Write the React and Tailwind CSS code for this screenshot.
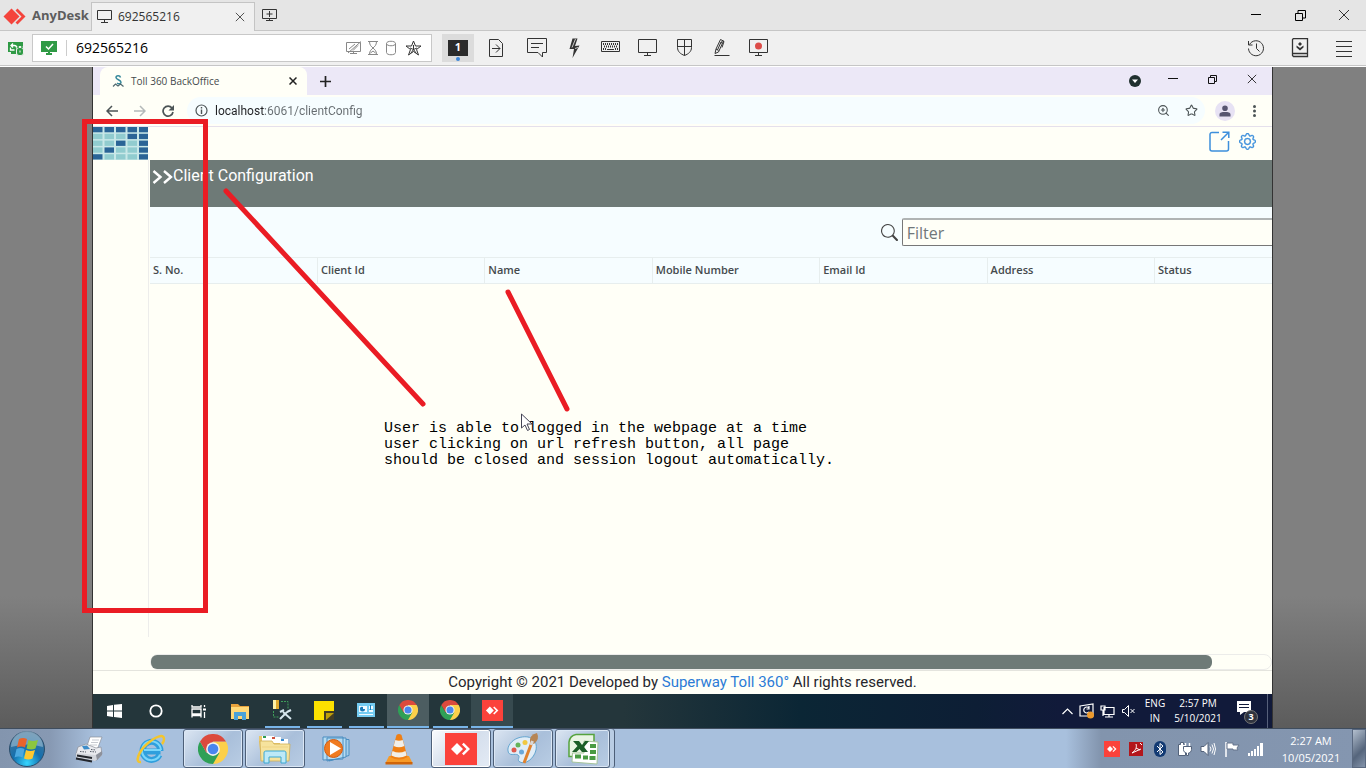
import React from 'react';
import { BsGear, BsSearch } from 'react-icons/bs';
import { Star, ZoomIn } from 'lucide-react';

const ui = "font-['Open_Sans','Noto_Sans',sans-serif]";

function Svg({ w, h, children, className = '' }) {
  return (
    <svg width={w} height={h} viewBox={`0 0 ${w} ${h}`} fill="none" stroke="currentColor" className={`shrink-0 ${className}`} aria-hidden="true">
      {children}
    </svg>
  );
}

function IconButton({ label, className = '', children }) {
  return (
    <button type="button" aria-label={label} className={`flex shrink-0 items-center justify-center ${className}`}>
      {children}
    </button>
  );
}

const AnyDeskLogo = () => (
  <Svg w={23} h={17}>
    <g stroke="none" fill="#f4443c">
      <path d="M8.500 0.500l8 8-8 8-8-8z" />
      <path d="M12.500 2.500l2-2 8 8-8 8-2-2 6-6z" />
    </g>
  </Svg>
);

const AnyDeskTile = ({ size }) => (
  <svg width={size} height={size} viewBox="0 0 32 32" aria-hidden="true">
    <path fill="#fb423b" d="M0 0h32v32H0z" />
    <path fill="#fff" d="M12 10l6 6-6 6-6-6zM17 11.500l1.700-1.700L25 16l-6.300 6.200L17 20.500l4.500-4.500z" />
  </svg>
);

const Monitor = () => (
  <Svg w={20} h={20}>
    <path d="M.5 1.500h18v13h-18zM9.500 14.500v3M6 17.500h7" />
  </Svg>
);

const Close = ({ size = 12 }) => (
  <svg width={size} height={size} viewBox="0 0 12 12" stroke="currentColor" fill="none" aria-hidden="true">
    <path d="M1 1l10 10M11 1L1 11" />
  </svg>
);

const Restore = () => (
  <Svg w={11} h={11}>
    <path d="M.5 3.500h7v7h-7zM3 3.500v-3h7.500v7.500h-3" />
  </Svg>
);

const Minimize = () => (
  <Svg w={10} h={2}>
    <path d="M0 .5h10" />
  </Svg>
);

const Chrome = ({ size }) => (
  <svg width={size} height={size} viewBox="0 0 48 48" aria-hidden="true">
    <path fill="#fcd04a" d="M24 24l0 24a24 24 0 0 0 20.800-36L24 12z" />
    <path fill="#2fa056" d="M3.200 12A24 24 0 0 0 24 48l10.400-18L13.600 30z" />
    <path fill="#dc4a3d" d="M3.200 12L13.600 30 24 12h20.800A24 24 0 0 0 3.200 12z" />
    <circle cx="24" cy="24" r="11" fill="#f2f2ee" />
    <circle cx="24" cy="24" r="8.500" fill="#4a86ee" />
  </svg>
);

const toolbarItems = [
  ['Chat', <Svg w={22} h={22}><path d="M1.500 1.500h19v14h-4v4.500l-4.500-4.500h-10.500zM5 6.500h12M5 10.500h8" /></Svg>],
  ['Actions', <Svg w={14} h={22}><path fill="currentColor" stroke="none" d="M5.500 1.500h5L8 9l4.500-.5L5.500 21 7 12 2.500 12z" /><path stroke="#f0f0f0" strokeWidth=".8" d="M8.500 2L5 10.500M8 11.500l3-1" /></Svg>],
  ['Keyboard', <Svg w={20} h={14}><path d="M.5.5h18v10H.5z" /><path strokeWidth="2" strokeDasharray="1 1" d="M2 3h15M3 5.500h13M2 8h3" /><path d="M6 8.500h7" /><path strokeWidth="2" strokeDasharray="1 1" d="M14 8h3" /></Svg>],
  ['Display', <Monitor />],
  ['Permissions', <Svg w={16} h={20}><path d="M.5 1.500h14v8c0 4-3 6.500-7 8-4-1.500-7-4-7-8zM7.500 1.500v16M.5 8.500h14" /></Svg>],
  ['Whiteboard', <Svg w={18} h={20}><path d="M1.500 17.500h15M2 15.500l1-4.500L7.500 1.500l3 1.500-5 11zM7.500 6l2-3.500 1.500 1-2 6M3 11l2.500 1.500M8 4L4.500 12" /></Svg>],
  ['Record', <Svg w={20} h={20}><path d="M.5 1.500h18v13h-18zM9.500 14.500v3M6 17.500h7" /><circle cx="9.500" cy="8" r="3.500" fill="#dc4c48" stroke="none" /></Svg>],
];

function AnyDeskBar() {
  return (
    <header className={`text-[#333] ${ui}`}>
      <div className="flex h-[31px] items-end border-b border-[#c6c6c6] bg-[#e5e5e5]">
        <div className="flex h-[28px] w-[91px] shrink-0 items-center gap-[6px] pl-[3px] text-[13px] font-bold text-[#5d5d5d]">
          <AnyDeskLogo />
          <span>AnyDesk</span>
        </div>
        <div className="-mb-px flex h-[29px] w-[164px] items-center border border-b-0 border-[#c4c4c4] bg-[#f0f0f0] pr-[6px] pl-[5px] text-xs">
          <Svg w={16} h={14}><path d="M.5.5h14v9H.5zM7.500 9.500v3M4 12.500h7" /></Svg>
          <span className="ml-[5px] flex-1">692565216</span>
          <IconButton label="Close tab" className="h-4 w-4"><Close size={10} /></IconButton>
        </div>
        <IconButton label="New tab" className="h-full w-[30px]">
          <Svg w={16} h={14}><path d="M.5 1.500h14v9H.5zM7.500 3v6M4.500 6h6M7.500 10.500v2M4 12.500h7" /></Svg>
        </IconButton>
        <div className="ml-auto flex h-full text-black">
          <IconButton label="Minimize" className="w-11"><Minimize /></IconButton>
          <IconButton label="Restore" className="w-11"><Restore /></IconButton>
          <IconButton label="Close" className="w-11 text-[#333]"><Close /></IconButton>
        </div>
      </div>
      <div className="flex h-[35px] items-center border-b border-[#c6c6c6] bg-[#f0f0f0]">
        <div className="flex w-8 shrink-0 justify-center text-[#2f9a45]">
          <Svg w={18} h={16}>
            <path fill="currentColor" stroke="none" d="M1 2h15v4H9.500v6H1zM4 12h5v2H4z" />
            <path stroke="#fff" strokeWidth="1.300" d="M4 5.500h3.500a2 2 0 0 1 2 2M6 3.500L4 5.500l2 2M3.500 7.500v2.500h4" />
            <rect x="9.500" y="7.500" width="7" height="8" rx="2.500" fill="currentColor" stroke="#f0f0f0" />
            <path strokeWidth="1.500" d="M11 8V6.500a2 2 0 0 1 4 0V8" />
            <path stroke="#fff" d="M13 10.500v2" />
          </Svg>
        </div>
        <div className="flex h-[28px] w-[400px] shrink-0 items-center border border-[#c8c8c8] bg-white pr-[9px] pl-[7px]">
          <Svg w={18} h={16} className="text-[#2f9a45]">
            <path fill="currentColor" stroke="none" d="M1 1h16v11H1zM8 12h2v2H8zM6 13h6v2H6z" />
            <path stroke="#fff" strokeWidth="1.500" d="M6 6.500L8.500 9 13 4" />
          </Svg>
          <span className="mr-[9px] ml-[8px] h-4 w-px bg-[#ccc]" />
          <input aria-label="Remote address" defaultValue="692565216" className="min-w-0 flex-1 bg-transparent text-sm text-black outline-none" />
          <div className="flex items-center gap-[4px] text-[#888]">
            <IconButton label="Privacy mode"><Svg w={16} h={16}><path d="M.5 2.500h14v9H.5zM7.500 11.500v2M4 13.500h7M2 13L15 1.500M3 9l6-5M7 10.500l5-5" /></Svg></IconButton>
            <IconButton label="Session time"><Svg w={14} h={16}><path d="M2 1.500h10M2 14.500h10M3.500 1.500c0 4 2 5 3.500 6.500C8.500 6.500 10.500 5.500 10.500 1.500M3.500 14.500c0-4 2-5 3.500-6.500 1.500 1.500 3.500 2.500 3.500 6.500M4.500 13l2.500-2 2.500 2" /></Svg></IconButton>
            <IconButton label="Storage"><Svg w={14} h={16}><path d="M2.500 3.500v9c0 3 9 3 9 0v-9M2.500 3.500c0-3 9-3 9 0s-9 3-9 0" /></Svg></IconButton>
            <IconButton label="Add to favourites" className="ml-[3px] text-[#333]"><Svg w={17} h={16}><path d="M8.500 1l2 5h5.500l-4.500 3.500 2 5.500-5-3.500-5 3.500 2-5.500L1 6h5.500zM8.500 5v4.500M8.500 9.500L5 8M8.500 9.500L12 8M8.500 9.500L6 13M8.500 9.500l2.500 3.500" /></Svg></IconButton>
          </div>
        </div>
        <IconButton label="Monitor 1" className="ml-[10px] h-[28px] w-[32px] flex-col gap-px bg-[#dcdcdc]">
          <span className="mt-1 flex h-4 w-5 items-center justify-center bg-[#2b2b2b] text-[11px] font-bold text-white">1</span>
          <span className="h-1 w-1 rounded-full bg-[#3d86d8]" />
        </IconButton>
        <IconButton label="File transfer" className="w-[44px]"><Svg w={14} h={20}><path d="M.5 1.500h9l4 4v13H.5zM3 10.500h8M7 6.500l4 4-4 4" /></Svg></IconButton>
        {toolbarItems.map(([label, icon]) => <IconButton key={label} label={label} className="w-[37px]">{icon}</IconButton>)}
        <div className="ml-auto flex">
          <IconButton label="History" className="w-11"><Svg w={18} h={18}><path d="M2.500 5.500a7.500 7.500 0 1 1-1 4M1.500 2v4h4M9.500 4.500v5l3 3" /></Svg></IconButton>
          <IconButton label="Address book" className="w-11"><Svg w={18} h={20}><path strokeWidth="1.300" d="M1.500 1.500l1-1h14v18h-14l-1-1zM2 15.500h14" /><path fill="currentColor" stroke="none" d="M9 4l2 2-2 2-2-2zM5.500 7.500L9 10l3.500-2.500v2L9 12.500 5.500 9.500z" /></Svg></IconButton>
          <IconButton label="Menu" className="w-11"><Svg w={16} h={17}><path d="M0 1.500h16M0 6.500h16M0 11.500h16M0 16.500h16" /></Svg></IconButton>
        </div>
      </div>
      <div className="h-px bg-white" />
    </header>
  );
}

function BrowserChrome() {
  return (
    <div className={ui}>
      <div className="flex h-[28px] items-center bg-[#ece8f7]">
        <div className="ml-[7px] flex h-full w-[207px] items-center rounded-t-lg bg-[#fffff7] pr-[8px] pl-[11px] text-[10px] text-[#454a4d]">
          <Svg w={14} h={14}>
            <path stroke="#35889b" strokeWidth="1.500" d="M9.500 3.500C9 1 5 1.200 5 3.500s5 2.200 5 4.700c0 1.500-2.500 2-4 .8" />
            <path stroke="#526a70" strokeWidth="1.200" d="M2 12.500l2.500-2.500 2.500 2L9.500 10l3 2.500" />
          </Svg>
          <span className="ml-[6px] flex-1 whitespace-nowrap">Toll 360 BackOffice</span>
          <IconButton label="Close browser tab" className="h-3 w-3 text-[#222]"><svg width="8" height="8" viewBox="0 0 8 8" stroke="currentColor" strokeWidth="1.500" aria-hidden="true"><path d="M.5.5l7 7M7.500.5l-7 7" /></svg></IconButton>
        </div>
        <IconButton label="New browser tab" className="w-[37px] text-[#222]"><Svg w={11} h={11}><path strokeWidth="1.700" d="M5.500 0v11M0 5.500h11" /></Svg></IconButton>
        <div className="ml-auto flex items-start text-[#111]">
          <IconButton label="Search tabs" className="h-4 w-[39px]"><Svg w={12} h={12}><circle cx="6" cy="6" r="6" fill="#20302f" stroke="none" /><path fill="#fff" stroke="none" d="M3 4.500h6L6 8z" /></Svg></IconButton>
          <IconButton label="Minimize browser" className="h-3 w-[38px]"><Minimize /></IconButton>
          <IconButton label="Restore browser" className="h-3 w-[40px]"><Svg w={9} h={9}><path d="M.5 2.500h6v6h-6zM2.500 2.500v-2h6v6h-2" /></Svg></IconButton>
          <IconButton label="Close browser" className="h-3 w-[40px]"><Close size={10} /></IconButton>
        </div>
      </div>
      <div className="flex h-8 items-center border-b border-[#e5e0ec] bg-[#fffff7] pl-[5px] text-[#4c5456]">
        <IconButton label="Back" className="w-7"><Svg w={12} h={12}><path strokeWidth="1.500" d="M12 6H1M6 1L1 6l5 5" /></Svg></IconButton>
        <IconButton label="Forward" className="w-7 text-[#b4b9b9]"><Svg w={12} h={12}><path strokeWidth="1.500" d="M0 6h11M6 1l5 5-5 5" /></Svg></IconButton>
        <IconButton label="Reload" className="w-7"><Svg w={12} h={12}><path strokeWidth="1.700" d="M10 3a5 5 0 1 0 1 4" /><path fill="currentColor" stroke="none" d="M12 0v5.500H6.500z" /></Svg></IconButton>
        <div className="ml-[5px] flex h-[27px] min-w-0 flex-1 items-center rounded-full bg-[#f6fdff] pl-[8px]">
          <Svg w={13} h={13}><circle cx="6.500" cy="6.500" r="5.500" strokeWidth="1.200" /><path strokeWidth="1.400" d="M6.500 3v1.500M6.500 5.500V10" /></Svg>
          <input aria-label="Web address" defaultValue="localhost:6061/clientConfig" className="ml-[7px] min-w-0 flex-1 bg-[linear-gradient(to_right,#202124_50px,#666c70_50px)] bg-clip-text font-[Roboto,sans-serif] text-xs text-transparent outline-none" />
          <IconButton label="Zoom" className="w-7"><ZoomIn size={13} strokeWidth={2} /></IconButton>
          <IconButton label="Bookmark" className="w-7"><Star size={13} strokeWidth={2} /></IconButton>
        </div>
        <IconButton label="Profile" className="mr-[5px] ml-[10px] h-5 w-5 rounded-full bg-[#e7e2f4] text-[#575571]"><Svg w={12} h={12}><path fill="currentColor" stroke="none" d="M6 .5a2.800 2.800 0 1 1 0 5.600 2.800 2.800 0 0 1 0-5.600zM.5 11.500V9.500C.5 7.500 3 7 6 7s5.500.5 5.500 2.500v2z" /></Svg></IconButton>
        <IconButton label="Browser menu" className="mr-[4px] w-7"><Svg w={3} h={12}><g fill="currentColor" stroke="none"><circle cx="1.500" cy="1.500" r="1.500" /><circle cx="1.500" cy="6" r="1.500" /><circle cx="1.500" cy="10.500" r="1.500" /></g></Svg></IconButton>
      </div>
    </div>
  );
}

function TollLogo() {
  const cells = [];
  for (let r = 0; r < 5; r++) {
    for (let c = 0; c < 5; c++) {
      const dark = r === 0 || c === 4 || r + c === 4;
      cells.push(<path key={`${r}-${c}`} fill={dark ? '#2a6496' : '#91cccf'} d={`M${c * 11.5} ${r * 6.8}h9.500v5.300h-9.500z`} />);
    }
  }
  return <svg width="55" height="33" viewBox="0 0 55 33" role="img" aria-label="Toll 360"><path fill="#c9e8e8" d="M0 0h56v33H0z" />{cells}</svg>;
}

const columns = ['S. No.', 'Client Id', 'Name', 'Mobile Number', 'Email Id', 'Address', 'Status'];

function TollPage() {
  return (
    <div className="flex flex-1 flex-col bg-[#fffff7]">
      <div className="flex h-[33px] items-start justify-between">
        <TollLogo />
        <div className="mr-[16px] flex h-[29px] items-center gap-[9px] text-[#3d8fdc]">
          <IconButton label="Open in new window"><Svg w={21} h={21}><path strokeWidth="1.500" d="M10 1.500H3a2 2 0 0 0-2 2V18a2 2 0 0 0 2 2h14.500a2 2 0 0 0 2-2v-8M12 9l7.500-7.500M13.500 1.200h6.300V7" /></Svg></IconButton>
          <IconButton label="Settings"><BsGear size={17} strokeWidth="0.3" /></IconButton>
        </div>
      </div>
      <div className="flex flex-1">
        <nav aria-label="Sections" className="mb-[33px] w-[56px] shrink-0 border-r border-[#ededeb]" />
        <main className="ml-px flex min-w-0 flex-1 flex-col">
          <h1 className="flex h-[47px] items-start bg-[#6e7a77] pt-[4px] pl-[2px] font-[Roboto,sans-serif] text-base text-white">
            <Svg w={21} h={24}><path strokeWidth="2.400" d="M1.500 7l7 6-7 6M12 7l7 6-7 6" /></Svg>
            <span>Client Configuration</span>
          </h1>
          <div className={`overflow-hidden bg-[#f6fdff] ${ui}`}>
            <div className="flex h-[50px] items-center justify-end">
              <label htmlFor="filter" aria-label="Filter" className="mr-[4px] text-[#444]"><BsSearch size={17} /></label>
              <input id="filter" placeholder="Filter" className="h-[28px] w-[33%] rounded-l-[2px] border border-t-2 border-r-0 border-[#777] border-t-[#b0b4b4] bg-[#fffff7] px-[4px] text-base outline-none placeholder:text-[#70777a]" />
            </div>
            <table className="w-[104.5%] table-fixed border-collapse text-left text-[11px] text-[#454a4d]">
              <thead>
                <tr className="h-[26px] border-y border-[#e7eeee]">
                  {columns.map((c) => <th key={c} scope="col" className="border-r border-[#e7eeee] px-[3px] py-0 font-semibold">{c}</th>)}
                </tr>
              </thead>
            </table>
          </div>
          <div className="mt-auto h-4 rounded-lg border border-[#ececea]">
            <div className="h-[14px] w-[94.7%] rounded-md bg-[#6e7a77]" />
          </div>
        </main>
      </div>
      <footer className="flex h-6 items-center justify-center border-t border-[#e4e4de] font-[Roboto,sans-serif] text-[15px] text-[#26262c]">
        <p>Copyright © 2021 Developed by <a href="#superway" className="text-[#2b7bd6]">Superway Toll 360°</a> All rights reserved.</p>
      </footer>
    </div>
  );
}

const remoteTasks = [
  ['Start', <Svg w={15} h={14}><path fill="#fff" stroke="none" d="M0 2l6-1v5.500H0zM7 .8L15 0v6.500H7zM0 7.500h6V13l-6-1zM7 7.500h8V14l-8-1z" /></Svg>, ''],
  ['Cortana', <Svg w={14} h={14}><circle cx="7" cy="7" r="5.700" stroke="#fff" strokeWidth="1.800" /></Svg>, ''],
  ['Task view', <Svg w={15} h={14}><path stroke="#fff" strokeWidth="1.300" d="M1 1v2h9V1M1 5h9v5H1zM1 13.500v-2h9v2M13.500 1v2M13.500 8v6" /><path fill="#fff" stroke="none" d="M12 4.500h3v2h-3z" /></Svg>, ''],
  ['File Explorer', <Svg w={20} h={17}><g stroke="none"><path fill="#e8a33d" d="M1 1h7l2 2h9v4H1z" /><path fill="#ffd978" d="M1 4h18v12H1z" /><path fill="#4ba3d9" d="M4 9h12v8h-4v-4H8v4H4z" /></g></Svg>, ''],
  ['Database tools', <Svg w={22} h={22}><path stroke="#3f9d5a" strokeDasharray="2 1" d="M10 2.500h7v7M2.500 12v6h6" /><g stroke="none"><path fill="#e0aa2f" d="M2 1h6v9H2z" /><path fill="#fff2a6" d="M2 1h3v9H2z" /></g><path stroke="#d7e7ee" strokeWidth="2" d="M9 20l7-7M12 13l8 7M9 13l4-2M16 13l4-2" /></Svg>, 'open'],
  ['Sticky Notes', <Svg w={20} h={19}><path fill="#fce100" stroke="none" d="M0 0h20v10h-10v9H0z" /><path fill="#433d24" stroke="none" d="M20 10v9H10z" /><path fill="#433d24" stroke="none" d="M10 10h10v9H10z" /><path fill="#be9f0a" stroke="none" d="M12 12h8l-8 7z" /></Svg>, 'open'],
  ['System panel', <Svg w={18} h={14}><g stroke="none"><path fill="#75ccf2" d="M0 0h18v14H0z" /><path fill="#f2fbff" d="M2 3h8v6H2zM12 3h4v3h-4zM12 7h4v2h-4zM2 11h14v1H2z" /><path fill="#197ab8" d="M3 6a2 2 0 0 1 3-2v2h2a2 2 0 0 1-5 0zM13 2h1v5h-1z" /></g></Svg>, 'open'],
  ['Google Chrome', <Chrome size={20} />, 'active'],
  ['Google Chrome 2', <Chrome size={20} />, 'open'],
  ['AnyDesk remote', <AnyDeskTile size={21} />, 'selected'],
];

const remoteState = {
  '': '',
  open: '',
  active: 'bg-[#4c5d61]',
  selected: 'bg-[#374a4f]',
};

function RemoteTaskbar() {
  return (
    <div className={`flex h-[34px] items-center bg-[linear-gradient(to_right,#24363b_0,#24363b_45%,#0b2635_60%,#0d1e35_75%,#111a3a_82%)] text-white ${ui}`}>
      {remoteTasks.map(([label, icon, state]) => (
        <IconButton key={label} label={label} className={`h-full w-[42px] flex-col ${remoteState[state]}`}>
          <span className="flex flex-1 items-center">{icon}</span>
          {state && <span className={`h-[2px] bg-[#78b4e8] ${state === 'open' ? 'w-[35px]' : 'w-full'}`} />}
        </IconButton>
      ))}
      <div className="ml-auto flex items-center">
        <IconButton label="Hidden icons" className="w-[20px]"><Svg w={11} h={7}><path strokeWidth="1.200" d="M.5 6l5-5 5 5" /></Svg></IconButton>
        <IconButton label="Updates" className="w-[20px]"><Svg w={16} h={16}><path strokeWidth="1.200" d="M1 3l13-2v12H1zM10 5a3 3 0 1 0 0 4M7.500 6H10V3" /><circle cx="11.500" cy="12" r="3.500" fill="#ed9a2d" stroke="none" /></Svg></IconButton>
        <IconButton label="Network" className="w-[21px]"><Svg w={15} h={13}><path strokeWidth="1.200" d="M4 2.500h10v7H4zM9 9.500V12M5 12h8M1 1h4v4H1zM3 5v6" /></Svg></IconButton>
        <IconButton label="Muted" className="w-[20px]"><Svg w={13} h={12}><path d="M.5 4.500h2l4-4v11l-4-4h-2zM8.500 4l4 4M12.500 4l-4 4" /></Svg></IconButton>
        <div className="w-[34px] text-center text-[10px] leading-[15px]">ENG<br />IN</div>
        <div className="w-[52px] text-center text-[10px] leading-[15px] whitespace-nowrap">2:57 PM<br />5/10/2021</div>
        <IconButton label="3 notifications" className="relative ml-[12px] h-[26px] w-[22px] items-start justify-start">
          <Svg w={16} h={18}><path fill="#fff" stroke="none" d="M1 3h14v11H8l-4 3v-3H1z" /><path stroke="#111a3a" d="M3 6.500h10M3 9.500h10" /></Svg>
          <span className="absolute right-0 bottom-0 flex h-[14px] w-[14px] items-center justify-center rounded-full border border-[#777] bg-[#30343f] text-[9px] font-bold">3</span>
        </IconButton>
        <span className="mr-[4px] ml-[9px] h-[34px] w-px bg-[#56607a]" />
      </div>
    </div>
  );
}

const Fax = () => (
  <Svg w={30} h={28}>
    <path fill="#fff" stroke="#8b8f99" strokeWidth=".7" d="M16 2h12l-5 13-11-1z" />
    <path stroke="#b9bcc4" strokeWidth=".8" d="M18 5h7M17 7.500h7M16 10h7" />
    <path fill="#e9eaee" stroke="#8b8f99" strokeWidth=".7" d="M4 12l8-3 10 4 5-1 1 7-5 6-20-2-1-4z" />
    <path fill="#d2d5db" stroke="none" d="M2 18l19 2 7-3v3l-7 6-19-4z" />
    <path fill="#3d8dc9" stroke="none" d="M8 11l5-.5L16 14l-6 .5z" />
    <path stroke="#555b66" strokeDasharray="1.500 1" d="M17 14.500l5 .5M16 16.500l6 .5M6 16.500l6 .5" />
    <path stroke="#23262c" strokeWidth="1.800" d="M3 20.500l15 2.500M2 23.500l16 3" />
    <path fill="#8d919b" stroke="none" d="M22 20l6-4v4l-5 5z" />
  </Svg>
);

const Explorer = () => (
  <svg width="32" height="32" viewBox="0 0 32 32" aria-hidden="true">
    <path fill="none" stroke="#2f9fdd" strokeWidth="6" d="M25.500 18.500H9M25.500 18A9 9 0 1 0 24.500 22" />
    <path fill="none" stroke="#7ad6fa" strokeWidth="2" d="M26 17H9M26 17A9.500 9.500 0 1 0 25 22" />
    <path fill="none" stroke="#f3c52e" strokeWidth="2.500" d="M6 29C-1 30 4 18 12 11S29 0 29 6c0 2-1 4-2 5" />
  </svg>
);

const Folder = () => (
  <svg width="32" height="32" viewBox="0 0 32 32" aria-hidden="true">
    <path fill="#e9c769" d="M0 8V3h9l2 3h18v20H2z" /><path fill="#fff" d="M3 3h12v5H3zM13 4h9v6h-9zM21 6h8v6h-8z" />
    <path fill="#2f9b55" d="M4 3h3v2H4z" /><path fill="#ce513d" d="M13 4h3v2h-3z" /><path fill="#368bd0" d="M22 6h3v2h-3z" />
    <path fill="#f6e39d" stroke="#cfae55" strokeWidth=".8" d="M1 8h12l2 3h16l-1 17H2z" /><path fill="none" stroke="#efd383" d="M3 14h26" />
    <path fill="#bde9f7" stroke="#3ba8d3" d="M5 20c0-2 1-2 3-2h16c2 0 3 0 3 2v10h-5v-6H10v6H5z" />
  </svg>
);

const MediaPlayer = () => (
  <svg width="30" height="28" viewBox="0 0 30 28" aria-hidden="true">
    <path fill="#a5cfea" stroke="#4b8dc0" d="M7 4.500h20v16L7 26z" /><path fill="#b5dcf2" stroke="#4b8dc0" d="M5 3h19v19L5 26zM1 2h20v22l-20 1z" />
    <circle cx="11.500" cy="13.500" r="9" fill="#f07b20" stroke="#d25c14" /><path fill="#fff" d="M8 7l11 6.500L8 20z" />
  </svg>
);

const Vlc = () => (
  <svg width="28" height="32" viewBox="0 0 28 32" aria-hidden="true">
    <path fill="#f79a28" d="M4 23h20l3.500 7H.5z" /><path fill="#cf640a" d="M.5 29h27v2.500H.5z" />
    <path fill="#ef7f14" d="M11.500 2q2.500-2 5 0L22.500 24q-8.500 5-17 0z" />
    <path fill="#f1efe9" d="M10.300 7q3.700 1.500 7.400 0l1.600 6q-5.300 2.500-10.600 0zM7.500 18q6.500 3 13 0l1.200 4.500q-7.700 4-15.400 0z" />
  </svg>
);

const Paint = () => (
  <svg width="34" height="32" viewBox="0 0 34 32" aria-hidden="true">
    <path fill="#e1edf7" stroke="#62a4cf" d="M12 5c12-4 20 2 18 12-2 9-11 15-16 12-4-2 1-5-2-7-3-2-9 2-10-4-1-5 4-11 10-13z" />
    <circle cx="8" cy="17" r="2.500" fill="#df594d" /><circle cx="12" cy="12" r="2.500" fill="#66b45b" /><circle cx="19" cy="9.500" r="2.500" fill="#f1c841" /><circle cx="15.500" cy="19" r="2.500" fill="#6aa7d8" />
    <path stroke="#e0812d" strokeWidth="3" d="M18 30L26 9" /><path fill="#b68555" d="M24 9q-1-7 7-9 3 6-3 11z" /><path stroke="#d8d8d8" strokeWidth="3" d="M25 12l1.500-4" />
  </svg>
);

const Excel = () => (
  <svg width="32" height="32" viewBox="0 0 32 32" aria-hidden="true">
    <path fill="#eaf5e4" stroke="#56a33d" strokeWidth="1.500" d="M9 1.500h18v22H2V9q1-6.500 7-7.500z" /><path fill="#fff" stroke="#a5c49a" d="M17 8l14 1-1 22-25-2 .5-9H17z" />
    <path fill="#4a9b43" d="M23 11h6v4h-6zM23 17h6v4h-6zM22.500 23h6v4h-6zM16 22.500h5v4h-5zM8 21.500h6v4H8z" />
    <path fill="#1c5e28" d="M6 8h6l3 4 3-4h4l-5 6 4 5h-6l-2.500-3-3 3H5l5.500-6z" />
  </svg>
);

const Orb = () => (
  <svg width="38" height="38" viewBox="0 0 38 38" aria-hidden="true">
    <defs>
      <radialGradient id="orb" cx=".5" cy=".9" r=".9"><stop offset="0" stopColor="#36d6ff" /><stop offset=".45" stopColor="#136fae" /><stop offset="1" stopColor="#4e7897" /></radialGradient>
    </defs>
    <circle cx="19" cy="19" r="17.500" fill="url(#orb)" stroke="#2a4d6b" />
    <path fill="#a9c6d8" opacity=".55" d="M3 17a16 16 0 0 1 32 0q-15-5-32 0z" />
    <path fill="#e8642b" d="M11 9q4-2 8 0l-2 8.500q-4-2-8 0z" /><path fill="#8cc63f" d="M20.500 10q4 2 9.500 0l-2.500 8.500q-4 2-9 0z" />
    <path fill="#4ba8e0" d="M8.500 19q4-2 8 0l-2 8.500q-4-2-8 0z" /><path fill="#fdc82f" d="M18 20q4 2 9 0l-2.500 8.500q-4 2-8.500 0z" />
  </svg>
);

const hostTasks = [
  ['Fax', <Fax />, ''],
  ['Internet Explorer', <Explorer />, ''],
  ['Chrome', <Chrome size={30} />, 'open'],
  ['Explorer', <Folder />, 'open'],
  ['Media Player', <MediaPlayer />, ''],
  ['VLC', <Vlc />, ''],
  ['AnyDesk', <AnyDeskTile size={32} />, 'active'],
  ['Paint', <Paint />, 'open'],
  ['Excel', <Excel />, 'stack'],
];

const hostState = {
  '': 'w-[60px]',
  open: 'w-[60px] border border-[#4d5f78] bg-[linear-gradient(135deg,#dce6f2,#a9bfda_55%,#b9cde4)] shadow-[inset_0_0_0_1px_#dbe7f5]',
  stack: 'mr-[5px] w-[55px] border border-[#4d5f78] bg-[linear-gradient(135deg,#dce6f2,#a9bfda_55%,#b9cde4)] shadow-[inset_0_0_0_1px_#dbe7f5,4px_0_0_0_#b9cde4,5px_0_0_0_#4d5f78]',
  active: 'w-[60px] border border-[#4d5f78] bg-[linear-gradient(135deg,#fbfcfe,#d4deec_50%,#e4ebf5)] shadow-[inset_0_0_0_1px_#ffffff]',
};

const tray = [
  ['AnyDesk tray', <AnyDeskTile size={16} />],
  ['PDF reader', <Svg w={16} h={16}><path fill="#b3161b" stroke="none" d="M1 1h14v14H1z" /><path stroke="#fff" d="M4 12c4-3 5-6 4-9M4 12l9-4M8 7l4 2M12 2l2 2" /></Svg>],
  ['Bluetooth', <Svg w={12} h={16}><rect width="12" height="16" rx="6" fill="#123a73" stroke="none" /><path stroke="#fff" d="M3 5l6 6-3 2.500V2.500L9 5l-6 6" /></Svg>],
  ['Power', <Svg w={15} h={16}><path fill="#fff" stroke="#53627a" d="M1.500 3.500h2v-2h3v2h2v11h-7z" /><path fill="#fff" stroke="#53627a" d="M6.500 5.500h8v3c0 2-1.500 3-3 3.500v2.500h-2V12c-2-.5-3-1.500-3-3.500z" /><path stroke="#fff" strokeWidth="1.500" d="M8.500 2v3M12.500 2v3" /></Svg>],
  ['Volume', <Svg w={16} h={16}><path fill="#fff" stroke="#53627a" d="M1 5.500h3l4-4v13l-4-4H1z" /><path stroke="#fff" d="M10 5.500q2 2.500 0 5M12 3.500q3 4.500 0 9M14 2q3 6 0 12" /></Svg>],
  ['Action center', <Svg w={16} h={16}><path stroke="#fff" strokeWidth="1.500" d="M2 1v15" /><path fill="#fff" stroke="#66758c" d="M3 2h6v2h6l-2 3 1 2H9V8H3z" /></Svg>],
  ['Signal', <Svg w={16} h={16}><path fill="#fff" stroke="none" d="M0 12h2v3H0zM3 10h2v5H3zM6 8h2v7H6zM9 5h2v10H9zM12 2h3v13h-3z" /></Svg>],
];

function HostTaskbar() {
  return (
    <footer className={`flex h-[40px] items-center border-t border-[#3f4d5e] bg-[linear-gradient(to_right,#8395ae_0,#8799b3_50px,#a8c0dd_95px,#a8c0dd_calc(100%-300px),#8294ad_calc(100%-265px),#8496b0_100%)] ${ui}`}>
      <IconButton label="Start menu" className="h-full w-[58px] pr-[4px]"><Orb /></IconButton>
      {hostTasks.map(([label, icon, state]) => (
        <div key={label} className="flex h-full w-[62px] shrink-0 justify-center">
          <IconButton label={label} className={`h-full rounded-[3px] ${hostState[state]}`}>{icon}</IconButton>
        </div>
      ))}
      <div className="ml-auto flex h-full items-center">
        {tray.map(([label, icon]) => <IconButton key={label} label={label} className="w-6">{icon}</IconButton>)}
        <div className="w-[84px] pl-[2px] text-center text-[11px] leading-[17px] text-white">2:27 AM<br />10/05/2021</div>
        <button type="button" aria-label="Show desktop" className="h-full w-[14px] border border-[#5a6980] bg-[linear-gradient(135deg,#b3bfce,#55657c_60%,#8494ab)]" />
      </div>
    </footer>
  );
}

export default function App() {
  return (
    <div className="relative flex min-h-screen flex-col overflow-hidden">
      <AnyDeskBar />
      <div className="flex flex-1 bg-[linear-gradient(to_bottom,#808080_0,#808080_80%,#5c5c5c_100%)] pr-[93px] pl-[92px]">
        <div className="flex min-w-0 flex-1 flex-col border-x border-[#333]">
          <BrowserChrome />
          <TollPage />
          <RemoteTaskbar />
        </div>
      </div>
      <HostTaskbar />

      <div className="pointer-events-none absolute top-[119px] left-[82px] h-[494px] w-[126px] border-[5px] border-[#ea1c24]" />
      <svg className="pointer-events-none absolute top-[186px] left-[220px]" width="210" height="224" viewBox="0 0 210 224" aria-hidden="true">
        <path d="M6 5l197 213" stroke="#ea1c24" strokeWidth="5" strokeLinecap="round" />
      </svg>
      <svg className="pointer-events-none absolute top-[286px] left-[502px]" width="72" height="130" viewBox="0 0 72 130" aria-hidden="true">
        <path d="M6 6l59 117" stroke="#ea1c24" strokeWidth="5" strokeLinecap="round" />
      </svg>
      <p className="absolute top-[421px] left-[384px] font-['Liberation_Mono',monospace] text-[15px] leading-4 whitespace-nowrap text-black">
        User is able to logged in the webpage at a time<br />
        user clicking on url refresh button, all page<br />
        should be closed and session logout automatically.
      </p>
      <svg className="pointer-events-none absolute top-[413px] left-[521px]" width="12" height="19" viewBox="0 0 12 19" aria-hidden="true">
        <path d="M.5 1v14l3.500-3 2.500 5.500 2-1L6 11h5z" fill="#fff" stroke="#444455" />
      </svg>
    </div>
  );
}
